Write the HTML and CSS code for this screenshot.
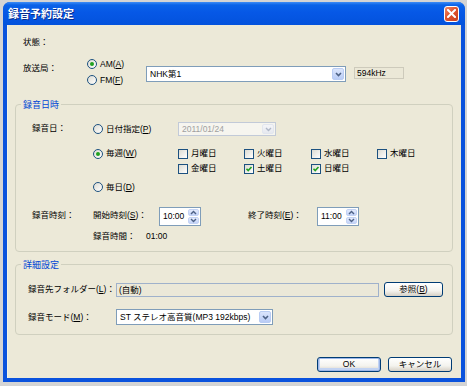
FILE: index.html
```html
<!DOCTYPE html>
<html lang="ja">
<head>
    <meta charset="UTF-8">
    <title>録音予約設定</title>
    <link rel="stylesheet" href="styles.css">
</head>
<body>
    <div class="window">
        <div class="titlebar">
            <span class="title">録音予約設定</span>
            <span class="close-btn">
                <svg width="9" height="9" viewBox="0 0 9 9">
                    <path d="M1 1 L8 8 M8 1 L1 8" stroke="#fff" stroke-width="2" stroke-linecap="square"/>
                </svg>
            </span>
        </div>

        <div class="client">
            <div class="status-row">状態：</div>

            <div class="station-row">
                <span class="station-label">放送局：</span>
                <div class="station-radios">
                    <label class="opt"><span class="radio checked"></span>AM(<u>A</u>)</label>
                    <label class="opt"><span class="radio"></span>FM(<u>F</u>)</label>
                </div>
                <div class="combo station-combo">
                    <span class="combo-text">NHK第1</span>
                    <span class="combo-arrow">
                        <svg width="9" height="9" viewBox="0 0 9 9"><path d="M2 3 L4.5 5.5 L7 3" fill="none" stroke="#4d6185" stroke-width="1.6"/></svg>
                    </span>
                </div>
                <div class="freq-box">594kHz</div>
            </div>

            <fieldset class="group group-datetime">
                <legend>録音日時</legend>

                <div class="date-row">
                    <span class="field-label">録音日：</span>
                    <div class="date-options">
                        <div class="option-line line-date">
                            <label class="opt opt-wide"><span class="radio"></span>日付指定(<u>P</u>)</label>
                            <div class="combo combo-disabled date-combo">
                                <span class="combo-text">2011/01/24</span>
                                <span class="combo-arrow">
                                    <svg width="9" height="9" viewBox="0 0 9 9"><path d="M2 3 L4.5 5.5 L7 3" fill="none" stroke="#b0b8c8" stroke-width="1.4"/></svg>
                                </span>
                            </div>
                        </div>

                        <div class="option-line line-week">
                            <label class="opt opt-wide opt-week"><span class="radio checked"></span>毎週(<u>W</u>)</label>
                            <div class="weekdays">
                                <label class="opt"><span class="check"></span>月曜日</label>
                                <label class="opt"><span class="check"></span>火曜日</label>
                                <label class="opt"><span class="check"></span>水曜日</label>
                                <label class="opt"><span class="check"></span>木曜日</label>
                                <label class="opt"><span class="check"></span>金曜日</label>
                                <label class="opt"><span class="check checked"><svg width="8" height="8" viewBox="0 0 8 8"><path d="M1.5 3.8 L3.2 5.6 L6.5 2" fill="none" stroke="#21a121" stroke-width="1.6"/></svg></span>土曜日</label>
                                <label class="opt"><span class="check checked"><svg width="8" height="8" viewBox="0 0 8 8"><path d="M1.5 3.8 L3.2 5.6 L6.5 2" fill="none" stroke="#21a121" stroke-width="1.6"/></svg></span>日曜日</label>
                            </div>
                        </div>

                        <div class="option-line line-daily">
                            <label class="opt opt-wide"><span class="radio"></span>毎日(<u>D</u>)</label>
                        </div>
                    </div>
                </div>

                <div class="time-row">
                    <span class="field-label">録音時刻：</span>
                    <span class="time-label">開始時刻(<u>S</u>)：</span>
                    <div class="spin">
                        <span class="spin-text">10:00</span>
                        <span class="spin-buttons">
                            <span class="spin-btn"><svg width="7" height="5" viewBox="0 0 7 5"><path d="M1 4 L3.5 1.5 L6 4" fill="none" stroke="#4d6185" stroke-width="1.4"/></svg></span>
                            <span class="spin-btn"><svg width="7" height="5" viewBox="0 0 7 5"><path d="M1 1 L3.5 3.5 L6 1" fill="none" stroke="#4d6185" stroke-width="1.4"/></svg></span>
                        </span>
                    </div>
                    <span class="time-label end-label">終了時刻(<u>E</u>)：</span>
                    <div class="spin">
                        <span class="spin-text">11:00</span>
                        <span class="spin-buttons">
                            <span class="spin-btn"><svg width="7" height="5" viewBox="0 0 7 5"><path d="M1 4 L3.5 1.5 L6 4" fill="none" stroke="#4d6185" stroke-width="1.4"/></svg></span>
                            <span class="spin-btn"><svg width="7" height="5" viewBox="0 0 7 5"><path d="M1 1 L3.5 3.5 L6 1" fill="none" stroke="#4d6185" stroke-width="1.4"/></svg></span>
                        </span>
                    </div>
                </div>

                <div class="duration-row">
                    <span class="field-label"></span>
                    <span class="duration-label">録音時間：</span>
                    <span>01:00</span>
                </div>
            </fieldset>

            <fieldset class="group group-detail">
                <legend>詳細設定</legend>

                <div class="detail-row">
                    <span class="detail-label">録音先フォルダー(<u>L</u>)：</span>
                    <div class="folder-box">(自動)</div>
                    <button class="btn browse-btn">参照(<u>B</u>)</button>
                </div>

                <div class="detail-row mode-row">
                    <span class="detail-label">録音モード(<u>M</u>)：</span>
                    <div class="combo mode-combo">
                        <span class="combo-text">ST ステレオ高音質(MP3 192kbps)</span>
                        <span class="combo-arrow">
                            <svg width="9" height="9" viewBox="0 0 9 9"><path d="M2 3 L4.5 5.5 L7 3" fill="none" stroke="#4d6185" stroke-width="1.6"/></svg>
                        </span>
                    </div>
                </div>
            </fieldset>

            <div class="actions">
                <button class="btn btn-default">OK</button>
                <button class="btn">キャンセル</button>
            </div>
        </div>
    </div>
</body>
</html>
```

FILE: styles.css
```css
* {
    margin: 0;
    padding: 0;
    box-sizing: border-box;
}

body {
    font-family: "Liberation Sans", "Noto Sans CJK JP", sans-serif;
    font-size: 8.5px;
    line-height: 13px;
    color: #000;
    background: #d4d4d4;
}

u {
    text-decoration: underline;
}

/* Fenêtre style XP */
.window {
    margin: 2px 0 0 3px;
    width: 462px;
    height: 380px;
    background: #0a52dd;
    border-radius: 7px 7px 0 0;
    display: flex;
    flex-direction: column;
}

.titlebar {
    height: 23px;
    display: flex;
    align-items: center;
    justify-content: space-between;
    padding: 0 6px 0 5px;
    border-radius: 7px 7px 0 0;
    background: linear-gradient(#3d8cf6 0, #0a63e8 3px, #0658e6 45%, #0352dc 100%);
}

.title {
    font-family: "Noto Sans CJK JP", sans-serif;
    font-size: 11px;
    font-weight: bold;
    color: #fff;
    text-shadow: 1px 1px 0 #0a2a8a;
}

.close-btn {
    width: 15px;
    height: 16px;
    border: 1px solid #fff;
    border-radius: 3px;
    background: linear-gradient(135deg, #f08a6a 0%, #e0542e 45%, #c8401e 100%);
    display: flex;
    align-items: center;
    justify-content: center;
}

.client {
    flex: 1;
    margin: 0 4px 4px;
    background: #ece9d8;
    border-left: 1px solid #f4f2e6;
    padding: 11px 9px 0 6px;
    display: flex;
    flex-direction: column;
}

.status-row {
    padding-left: 9px;
    height: 13px;
}

/* Station */
.station-row {
    margin-top: 8px;
    padding-left: 9px;
    display: flex;
    align-items: flex-start;
    height: 31px;
}

.station-label {
    width: 64px;
    margin-top: 5px;
}

.station-radios {
    width: 59px;
    display: flex;
    flex-direction: column;
    gap: 2px;
}

.opt {
    display: flex;
    align-items: center;
    height: 14px;
    white-space: nowrap;
}

.radio {
    width: 10px;
    height: 10px;
    border: 1px solid #1c5180;
    border-radius: 50%;
    background: linear-gradient(135deg, #dcdbd2, #fff);
    margin-right: 3px;
    position: relative;
    flex-shrink: 0;
}

.radio.checked::after {
    content: "";
    position: absolute;
    left: 2px;
    top: 2px;
    width: 4px;
    height: 4px;
    border-radius: 50%;
    background: #21a121;
}

.check {
    width: 10px;
    height: 10px;
    border: 1px solid #1c5180;
    background: linear-gradient(135deg, #dcdbd2, #fff);
    margin-right: 3px;
    display: flex;
    align-items: center;
    justify-content: center;
    flex-shrink: 0;
}

/* Combos */
.combo {
    display: flex;
    align-items: center;
    background: #fff;
    border: 1px solid #7f9db9;
    padding: 1px;
}

.combo-text {
    flex: 1;
    padding-left: 2px;
    white-space: nowrap;
    overflow: hidden;
}

.combo-arrow {
    width: 12px;
    height: 100%;
    border-radius: 2px;
    border: 1px solid #b9ccf3;
    background: linear-gradient(#dbe5fc, #b9ccf6);
    display: flex;
    align-items: center;
    justify-content: center;
}

.station-combo {
    margin-top: 9px;
    width: 200px;
    height: 16px;
}

.freq-box {
    margin: 10px 0 0 8px;
    width: 50px;
    height: 12px;
    line-height: 10px;
    border: 1px solid #cdcabb;
    background: #ebe8d7;
    padding-left: 2px;
}

/* Groupes */
.group {
    border: 1px solid #d0d0bf;
    border-radius: 4px;
    width: 438px;
    margin-left: 1px;
}

.group legend {
    font-family: "Noto Sans CJK JP", sans-serif;
    font-size: 9px;
    line-height: 13px;
    color: #0046d5;
    padding: 0 2px;
}

.group-datetime {
    margin-top: 10px;
    padding: 10px 0 8px 16px;
}

.group-datetime legend {
    margin-left: -11px;
}

.field-label {
    width: 61px;
    flex-shrink: 0;
}

.date-row {
    display: flex;
    align-items: flex-start;
}

.date-row .field-label {
    margin-top: 1px;
}

.date-options {
    display: flex;
    flex-direction: column;
}

.option-line {
    display: flex;
    align-items: flex-start;
}

.line-date {
    height: 16px;
    align-items: center;
}

.opt-wide {
    width: 85px;
}

.date-combo {
    width: 98px;
    height: 14px;
}

.combo-disabled {
    border-color: #c2cad8;
    background: #f6f5ef;
    color: #a0a0a0;
}

.combo-disabled .combo-arrow {
    border-color: #e2e6ee;
    background: linear-gradient(#f4f5f8, #e6e9ef);
}

.line-week {
    margin-top: 9px;
}

.opt-week {
    height: 15px;
}

.weekdays {
    display: grid;
    grid-template-columns: 66px 67px 66px 60px;
}

.weekdays .opt {
    height: 15px;
}

.line-daily {
    margin-top: 4px;
}

.time-row {
    margin-top: 13px;
    display: flex;
    align-items: flex-start;
    height: 19px;
}

.time-row .field-label,
.time-label {
    margin-top: 2px;
}

.time-label {
    width: 66px;
}

.end-label {
    margin-left: 47px;
    width: 69px;
}

.spin {
    width: 42px;
    height: 19px;
    background: #fff;
    border: 1px solid #7f9db9;
    display: flex;
    padding: 1px;
}

.spin-text {
    flex: 1;
    padding: 1px 0 0 2px;
}

.spin-buttons {
    width: 11px;
    display: flex;
    flex-direction: column;
    gap: 1px;
}

.spin-btn {
    flex: 1;
    border-radius: 2px;
    border: 1px solid #c4d3f5;
    background: linear-gradient(#e4ebfd, #c3d3f8);
    display: flex;
    align-items: center;
    justify-content: center;
}

.duration-row {
    margin-top: 3px;
    display: flex;
    height: 14px;
    align-items: center;
}

.duration-label {
    width: 53px;
}

.group-detail {
    margin-top: 6px;
    padding: 11px 0 9px 12px;
}

.group-detail legend {
    margin-left: -7px;
}

.detail-row {
    display: flex;
    align-items: center;
    height: 15px;
}

.detail-label {
    width: 88px;
    white-space: nowrap;
}

.folder-box {
    width: 263px;
    height: 14px;
    line-height: 12px;
    border: 1px solid #9fb1cb;
    background: #ebe8d8;
    padding-left: 2px;
}

.mode-row {
    margin-top: 12px;
    height: 16px;
}

.mode-combo {
    width: 157px;
    height: 16px;
}

/* Boutons */
.btn {
    font-family: inherit;
    font-size: 8.5px;
    line-height: 11px;
    color: #000;
    width: 64px;
    height: 15px;
    border: 1px solid #003c74;
    border-radius: 3px;
    background: linear-gradient(#fff 0%, #f4f3ee 60%, #d6d0c5 100%);
    cursor: pointer;
}

.browse-btn {
    width: 59px;
    margin-left: 5px;
}

.btn-default {
    box-shadow: inset 0 0 0 1px #9cb6e8, inset 0 -1px 0 2px #c2d3f2;
}

.actions {
    margin-top: 22px;
    display: flex;
    justify-content: flex-end;
    gap: 7px;
}
```
